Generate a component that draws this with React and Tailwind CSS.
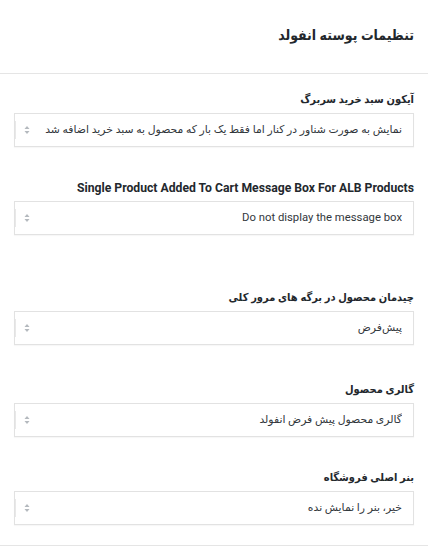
const FIELDS = [
  {
    label: "آیکون سبد خرید سربرگ",
    value: "نمایش به صورت شناور در کنار اما فقط یک بار که محصول به سبد خرید اضافه شد",
    gap: "mt-[16px]",
  },
  {
    label: "Single Product Added To Cart Message Box For ALB Products",
    value: "Do not display the message box",
    gap: "mt-[31px]",
    latin: true,
  },
  { label: "چیدمان محصول در برگه های مرور کلی", value: "پیش‌فرض", gap: "mt-[53px]" },
  { label: "گالری محصول", value: "گالری محصول پیش فرض انفولد", gap: "mt-[35px]" },
  { label: "بنر اصلی فروشگاه", value: "خیر، بنر را نمایش نده", gap: "mt-[31px]" },
];

const LABEL_FONT = '"Roboto", "DejaVu Sans Condensed", "DejaVu Sans", sans-serif';
const VALUE_FONT = '"Roboto", "DejaVu Sans", sans-serif';

function Arrows() {
  return (
    <svg width="6" height="10" viewBox="0 0 6 10" className="text-[#b4b9be]">
      <path d="M3 1 L5.5 4 H0.5 Z" fill="currentColor" />
      <path d="M3 9 L5.5 6 H0.5 Z" fill="currentColor" />
    </svg>
  );
}

function SelectRow({ label, value, gap, latin }) {
  return (
    <div className={gap}>
      <div
        className={`px-[14px] font-bold leading-[20px] text-[#23282d] ${
          latin ? "text-[12.2px]" : "text-[11px]"
        }`}
        style={{ fontFamily: LABEL_FONT }}
      >
        {label}
      </div>
      <div className="mx-[14px] mt-[3px] flex h-[34px] items-center border border-[#e2e2e2] bg-white pr-[11px] shadow-[0_1px_1px_rgba(0,0,0,0.03)]">
        <span
          className={`min-w-0 flex-1 overflow-hidden whitespace-nowrap text-[#32373c] ${
            latin ? "text-[11.3px]" : "text-[10.8px]"
          }`}
          style={{ fontFamily: VALUE_FONT }}
        >
          {value}
        </span>
        <span className="ml-[8px] flex items-center">
          <Arrows />
        </span>
        <span className="h-[18px] w-px bg-[#e8e8e8]" />
      </div>
    </div>
  );
}

export default function App() {
  return (
    <div dir="rtl" className="min-h-[558px] w-[428px] bg-white">
      <div
        className="flex h-[73px] items-center px-[14px] pb-[2px] text-[14px] font-bold text-[#23282d]"
        style={{ fontFamily: LABEL_FONT }}
      >
        تنظیمات پوسته انفولد
      </div>
      <div className="border-t border-[#e5e5e5]" />
      {FIELDS.map((f) => (
        <SelectRow key={f.label} {...f} />
      ))}
      <div className="mt-[20px] border-t border-[#e5e5e5]" />
    </div>
  );
}
